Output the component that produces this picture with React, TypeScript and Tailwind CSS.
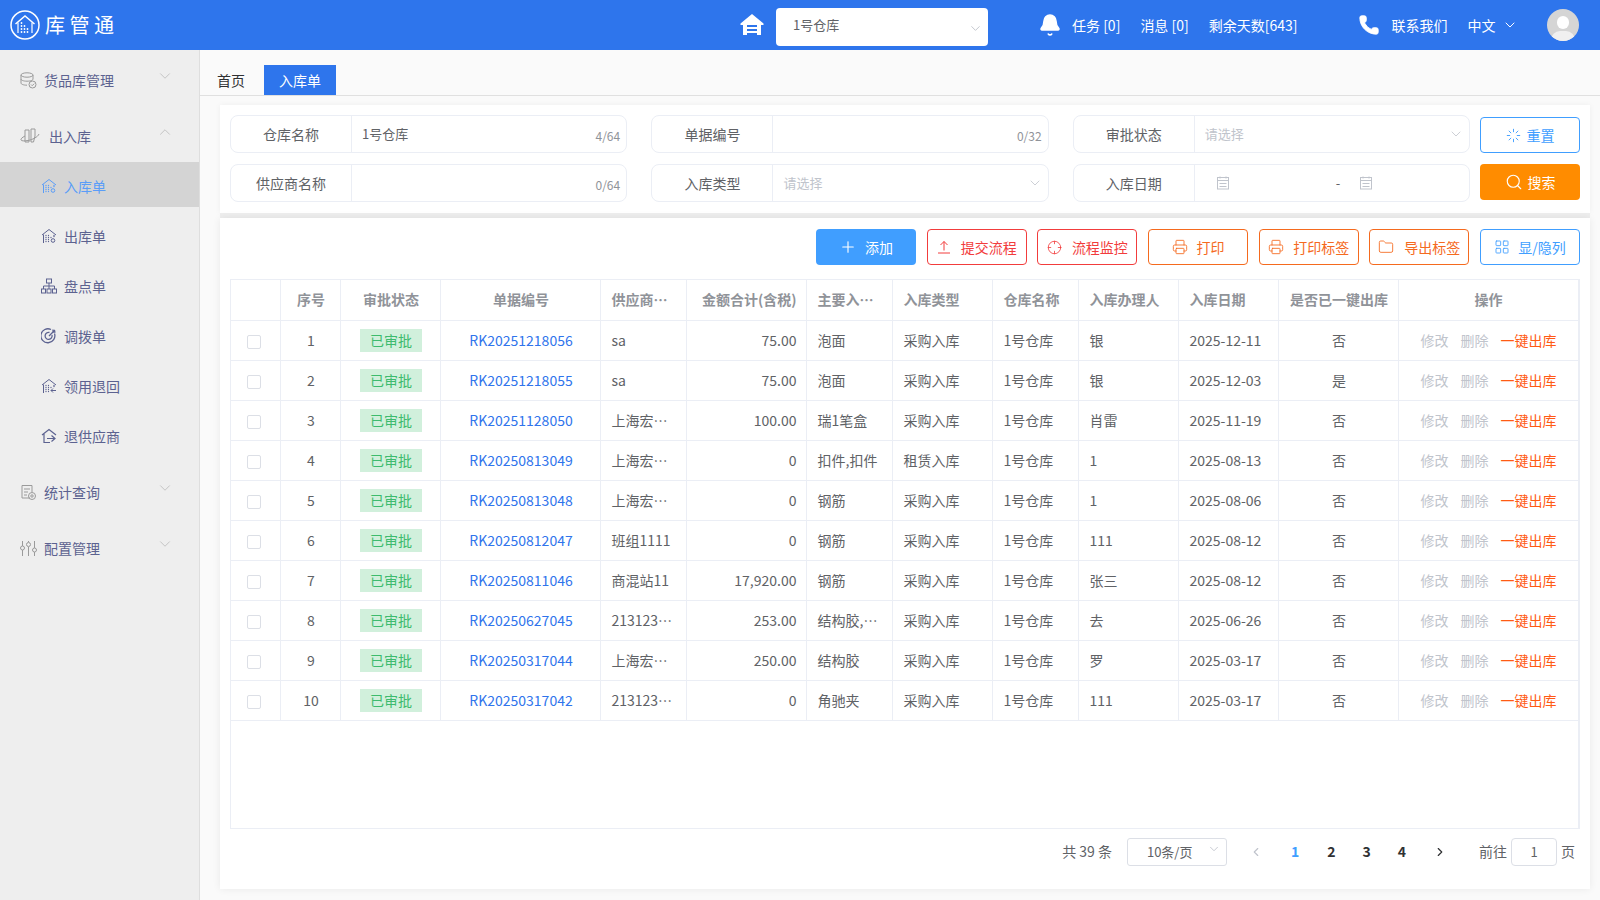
import React from "react";
import { Bell, ChevronDown, ChevronLeft, ChevronRight, ChevronUp, Phone, Plus, Search, Printer, Folder, LayoutGrid, Crosshair, Loader } from "lucide-react";

const rows = [
	{ no: 1, code: "RK20251218056", supplier: "sa", amount: "75.00", main: "泡面", type: "采购入库", person: "银", date: "2025-12-11", out: "否" },
	{ no: 2, code: "RK20251218055", supplier: "sa", amount: "75.00", main: "泡面", type: "采购入库", person: "银", date: "2025-12-03", out: "是" },
	{ no: 3, code: "RK20251128050", supplier: "上海宏…", amount: "100.00", main: "瑞1笔盒", type: "采购入库", person: "肖雷", date: "2025-11-19", out: "否" },
	{ no: 4, code: "RK20250813049", supplier: "上海宏…", amount: "0", main: "扣件,扣件", type: "租赁入库", person: "1", date: "2025-08-13", out: "否" },
	{ no: 5, code: "RK20250813048", supplier: "上海宏…", amount: "0", main: "钢筋", type: "采购入库", person: "1", date: "2025-08-06", out: "否" },
	{ no: 6, code: "RK20250812047", supplier: "班组1111", amount: "0", main: "钢筋", type: "采购入库", person: "111", date: "2025-08-12", out: "否" },
	{ no: 7, code: "RK20250811046", supplier: "商混站11", amount: "17,920.00", main: "钢筋", type: "采购入库", person: "张三", date: "2025-08-12", out: "否" },
	{ no: 8, code: "RK20250627045", supplier: "213123…", amount: "253.00", main: "结构胶,…", type: "采购入库", person: "去", date: "2025-06-26", out: "否" },
	{ no: 9, code: "RK20250317044", supplier: "上海宏…", amount: "250.00", main: "结构胶", type: "采购入库", person: "罗", date: "2025-03-17", out: "否" },
	{ no: 10, code: "RK20250317042", supplier: "213123…", amount: "0", main: "角驰夹", type: "采购入库", person: "111", date: "2025-03-17", out: "否" },
];

const colWidths = [49, 60, 100, 160, 86, 120, 86, 100, 86, 100, 100, 120, 181];

const HouseIcon = ({ className, mark }: { className?: string; mark?: React.ReactNode }) => (
	<svg viewBox="0 0 16 16" fill="none" stroke="currentColor" strokeWidth="1" className={className}>
		<path d="M1 7 8 1.5 15 7" />
		<path d="M2.5 6.500V15" />
		<path d="M5 7.500v.01M5 9.500v.01M5 11.500v.01M5 13.500v.01M7.500 7.500v.01M7.500 9.500v.01M7.500 11.500v.01M7.500 13.500v.01M10 9.500v.01M13 7.500v1" strokeWidth="1.300" strokeLinecap="round" />
		{mark}
	</svg>
);

const CalendarIcon = () => (
	<svg viewBox="0 0 14 14" fill="none" stroke="currentColor" className="h-[14px] w-[14px] shrink-0">
		<path d="M4 .5v2M10 .5v2" />
		<rect x="1.500" y="1.500" width="11" height="11.500" />
		<path d="M1.500 4.500h11M3.500 7.500h7M3.500 10.500h7" />
	</svg>
);

const SubItem = ({ label, icon, active }: { label: string; icon: React.ReactNode; active?: boolean }) => (
	<div className={`flex h-[45px] items-center pl-[41px] pt-[3px] ${active ? "bg-[#d4d4d4] text-[#5a9df8]" : "text-[#5c6290]"}`}>
		<span className="flex h-4 w-4 items-center justify-center">{icon}</span>
		<span className="ml-[7px] text-[14px]">{label}</span>
	</div>
);

const MenuGroup = ({ label, icon, open, wide }: { label: string; icon: React.ReactNode; open?: boolean; wide?: boolean }) => (
	<div className="flex h-[45px] items-center pl-[20px] pr-[25px] text-[#5c6290]">
		<span className="flex h-[18px] items-center justify-center text-[#9a9a9a]">{icon}</span>
		<span className={`text-[14px] ${wide ? "ml-[9px]" : "ml-[7px]"}`}>{label}</span>
		<span className="flex-1" />
		{open ? <ChevronUp className="mb-[10px] h-[18px] w-[18px] text-[#b5b5b5]" strokeWidth={1} /> : <ChevronDown className="mb-[10px] h-[18px] w-[18px] text-[#b5b5b5]" strokeWidth={1} />}
	</div>
);

const Field = ({ label, children }: { label: string; children: React.ReactNode }) => (
	<div className="flex h-[38px] items-stretch rounded-[8px] border border-[#ebeef5] bg-white">
		<div className="flex w-[121px] shrink-0 items-center justify-center border-r border-[#ebeef5] text-[14px] text-[#606266]">{label}</div>
		<div className="relative flex min-w-0 flex-1 items-center px-[10px] text-[13px] text-[#606266]">{children}</div>
	</div>
);

const Counter = ({ text }: { text: string }) => (
	<span className="absolute bottom-[9px] right-[6px] text-[12px] leading-[14px] text-[#909399]">{text}</span>
);

const SelectHint = () => (
	<>
		<span className="text-[#c0c4cc]">请选择</span>
		<ChevronDown className="absolute right-[5px] top-[10px] h-[16px] w-[16px] text-[#c0c4cc]" strokeWidth={1.2} />
	</>
);

const ToolButton = ({ icon, label, className }: { icon: React.ReactNode; label: string; className: string }) => (
	<button className={`flex h-[36px] w-[100px] items-center justify-center rounded-[4px] border text-[14px] ${className}`}>
		{icon}
		{label}
	</button>
);

export default function App() {
	return (
		<div className="flex h-[900px] w-[1600px] flex-col overflow-hidden bg-[#fafafa] font-['Noto_Sans_CJK_SC','Noto_Sans',sans-serif]">
			<header className="flex h-[50px] shrink-0 items-center bg-[#2e75ec] text-white">
				<svg viewBox="0 0 30 30" fill="none" stroke="white" className="ml-[10px] h-[30px] w-[30px] shrink-0">
					<circle cx="15" cy="15" r="14" strokeWidth="1.500" />
					<path d="M5.500 14 15 6l9.500 8" strokeWidth="1.500" />
					<path d="M8 12.500V23M22 12.500V23" strokeWidth="1.200" />
					<path d="M11.500 13v.01M11.500 16v.01M11.500 19v.01M11.500 22v.01M14.500 16v.01M14.500 19v.01M14.500 22v.01M17.500 19v.01M17.500 22v.01" strokeWidth="1.800" strokeLinecap="round" />
				</svg>
				<span className="ml-[5px] w-[76px] shrink-0 text-[20px] leading-none tracking-[4.500px]">库管通</span>

				<svg viewBox="0 0 24 24" fill="white" className="ml-[619px] h-[24px] w-[24px] shrink-0">
					<path d="M12 1 0.5 10.500V12H3v10h18V12h2.500v-1.500z" />
					<path d="M7 12h10v2H7zM7 16h10v2H7zM7 20h10v2H7z" fill="#2e75ec" />
				</svg>
				<div className="relative ml-[12px] mt-[4px] flex h-[38px] w-[212px] items-center rounded-[4px] bg-white pb-[4px] pl-[17px] text-[13px] text-[#606266]">
					1号仓库
					<ChevronDown className="absolute right-[5px] top-[13px] h-[15px] w-[15px] text-[#c0c4cc]" strokeWidth={1.5} />
				</div>
				<Bell className="ml-[50px] h-[24px] w-[24px]" fill="white" strokeWidth={1.5} />
				<span className="ml-[10px] text-[14px]">任务 [0]</span>
				<span className="ml-[20px] text-[14px]">消息 [0]</span>
				<span className="ml-[20px] text-[14px]">剩余天数[643]</span>
				<Phone className="ml-[60px] h-[22px] w-[22px]" fill="white" strokeWidth={1} />
				<span className="ml-[12px] text-[14px]">联系我们</span>
				<span className="ml-[20px] text-[14px]">中文</span>
				<ChevronDown className="ml-[6px] h-[16px] w-[16px]" strokeWidth={1.5} />
				<div className="relative ml-[29px] h-[32px] w-[32px] overflow-hidden rounded-full bg-[#d5d5d5]">
					<div className="absolute left-[10px] top-[7px] h-[13px] w-[12px] rounded-full bg-white" />
					<div className="absolute left-[4px] top-[22px] h-[18px] w-[24px] rounded-full bg-[#f0f0f0]" />
				</div>
			</header>

			<div className="flex min-h-0 flex-1">
				<aside className="w-[200px] shrink-0 border-r border-[#dedede] bg-[#eeeeee] pt-[8px]">
					<MenuGroup label="货品库管理" icon={
						<svg viewBox="0 0 17 17" fill="none" stroke="currentColor" className="h-[17px] w-[17px]">
							<ellipse cx="7" cy="3" rx="6" ry="2.200" />
							<path d="M1 3v8c0 1.200 2.500 2.200 6 2.200M1 7c0 1.200 2.500 2.200 6 2.200S13 8.200 13 7V3" />
							<circle cx="12.500" cy="12.500" r="3.500" />
							<path d="m11 12.500 1.200 1.200 2-2" />
						</svg>
					} />
					<div className="h-[11px]" />
					<MenuGroup label="出入库" open wide icon={
						<svg viewBox="0 0 20 17" fill="none" stroke="currentColor" className="h-[17px] w-[20px] shrink-0">
							<path d="M5 2h4v12H5zM11 1h4v7l-1.500 6H11z" />
							<path d="M5 8C2 9.500.5 11 1 12s3 1.200 7 .5 10-3.500 11-6.500" />
						</svg>
					} />
					<div className="h-[3px]" />
					<SubItem active label="入库单" icon={<HouseIcon className="h-4 w-4" mark={<circle cx="12" cy="12.500" r="1.800" />} />} />
					<div className="h-[5px]" />
					<SubItem label="出库单" icon={<HouseIcon className="h-4 w-4" mark={<circle cx="12" cy="12.500" r="1.800" />} />} />
					<div className="h-[5px]" />
					<SubItem label="盘点单" icon={
						<svg viewBox="0 0 16 16" fill="none" stroke="currentColor" className="h-4 w-4">
							<rect x="5.500" y="1" width="5" height="4" />
							<rect x="0.500" y="11" width="4" height="4" />
							<rect x="6" y="11" width="4" height="4" />
							<rect x="11.500" y="11" width="4" height="4" />
							<path d="M8 5v6M2.500 11V8h11v3" />
						</svg>
					} />
					<div className="h-[5px]" />
					<SubItem label="调拨单" icon={
						<svg viewBox="0 0 16 16" fill="none" stroke="currentColor" strokeWidth="1.300" className="h-4 w-4">
							<path d="M13.500 5.500A7 7 0 1 1 10 1.500" />
							<path d="M11 7a3.500 3.500 0 1 1-2.500-2.500" />
							<path d="M8 8l6-6M12 1.500V4h2.500" />
						</svg>
					} />
					<div className="h-[5px]" />
					<SubItem label="领用退回" icon={<HouseIcon className="h-4 w-4" mark={<path d="M10 12.500h5M12 10.500l-2 2 2 2" />} />} />
					<div className="h-[5px]" />
					<SubItem label="退供应商" icon={
						<svg viewBox="0 0 16 16" fill="none" stroke="currentColor" strokeWidth="1.200" className="h-4 w-4">
							<path d="M1 7 8 1.500 15 7M3 6v8.500h6" />
							<path d="M6 10.500h8M10.500 7.500 14 10.500 10.500 13.500" />
						</svg>
					} />
					<div className="h-[13px]" />
					<MenuGroup label="统计查询" icon={
						<svg viewBox="0 0 17 17" fill="none" stroke="currentColor" className="h-[17px] w-[17px]">
							<path d="M10 14H2V1.500h10V8" />
							<path d="M4 5h6M4 8h4M4 11h3" />
							<circle cx="12" cy="12" r="3.500" />
							<circle cx="12" cy="12" r="1.200" />
						</svg>
					} />
					<div className="h-[11px]" />
					<MenuGroup label="配置管理" icon={
						<svg viewBox="0 0 17 17" fill="none" stroke="currentColor" className="h-[17px] w-[17px]">
							<path d="M2.500 1v5M2.500 10v6M8.500 1v1M8.500 7v9M14.500 1v7M14.500 12v4" />
							<circle cx="2.500" cy="8" r="2" />
							<circle cx="8.500" cy="4.500" r="2" />
							<circle cx="14.500" cy="10" r="2" />
						</svg>
					} />
				</aside>

				<main className="flex min-w-0 flex-1 flex-col">
					<div className="flex h-[46px] shrink-0 items-end border-b border-[#e0e0e0] pl-[17px]">
						<div className="flex h-[30px] items-center text-[14px] text-[#303133]">首页</div>
						<div className="ml-[19px] flex h-[30px] w-[72px] items-center justify-center bg-[#2e75ec] text-[14px] text-white">入库单</div>
					</div>

					<div className="flex min-h-0 flex-1 flex-col pb-[11px] pl-[20px] pr-[10px] pt-[9px]">
						<section className="h-[108px] shrink-0 bg-white px-[10px] pt-[10px] shadow-[0_0_6px_rgba(0,0,0,0.05)]">
							<div className="flex gap-[10px]">
								<div className="grid flex-1 grid-cols-3 gap-x-[24.250px] gap-y-[11px]">
									<Field label="仓库名称">
										1号仓库
										<Counter text="4/64" />
									</Field>
									<Field label="单据编号">
										<Counter text="0/32" />
									</Field>
									<Field label="审批状态">
										<SelectHint />
									</Field>
									<Field label="供应商名称">
										<Counter text="0/64" />
									</Field>
									<Field label="入库类型">
										<SelectHint />
									</Field>
									<Field label="入库日期">
										<div className="flex w-full items-center text-[#c0c4cc]">
											<span className="ml-[11px]"><CalendarIcon /></span>
											<span className="ml-[106px] w-[8px] text-[#606266]">-</span>
											<span className="ml-[15px]"><CalendarIcon /></span>
										</div>
									</Field>
								</div>
								<div className="flex w-[100px] shrink-0 flex-col gap-[11px] pt-[2px]">
									<button className="flex h-[36px] items-center justify-center gap-[6px] rounded-[4px] border border-[#409eff] bg-white text-[14px] text-[#409eff]">
										<Loader className="h-[15px] w-[15px]" strokeWidth={1.5} />
										重置
									</button>
									<button className="flex h-[36px] items-center justify-center gap-[5px] rounded-[4px] bg-[#ff8c00] text-[14px] text-white">
										<Search className="h-[18px] w-[18px]" strokeWidth={1.5} />
										搜索
									</button>
								</div>
							</div>
						</section>

						<div className="h-[5px] shrink-0 bg-[#eeeeee]" />

						<section className="flex min-h-0 flex-1 flex-col bg-white px-[10px] shadow-[0_0_8px_rgba(0,0,0,0.07)]">
							<div className="flex h-[61px] shrink-0 items-center justify-end gap-[10.670px] pb-[3px]">
								<button className="flex h-[36px] w-[100px] items-center justify-center gap-[8px] rounded-[4px] bg-[#409eff] text-[14px] text-white">
									<Plus className="h-[18px] w-[18px]" strokeWidth={1.5} />
									添加
								</button>
								<ToolButton label="提交流程" className="gap-[10px] border-[#f23c3c] text-[#f23c3c]" icon={
									<svg viewBox="0 0 14 14" fill="none" stroke="currentColor" className="h-[14px] w-[14px]">
										<path d="M7 10.500V1.500M3.500 5 7 1.500 10.500 5M1 13h12" />
									</svg>
								} />
								<ToolButton label="流程监控" className="gap-[10px] border-[#f23c3c] text-[#f23c3c]" icon={<Crosshair className="h-[15px] w-[15px]" strokeWidth={1.3} />} />
								<ToolButton label="打印" className="gap-[9px] border-[#f56a1e] text-[#f56a1e]" icon={<Printer className="h-[16px] w-[16px]" strokeWidth={1.3} />} />
								<ToolButton label="打印标签" className="gap-[9px] border-[#f56a1e] text-[#f56a1e]" icon={<Printer className="h-[16px] w-[16px]" strokeWidth={1.3} />} />
								<ToolButton label="导出标签" className="gap-[10px] border-[#f56a1e] text-[#f56a1e]" icon={<Folder className="h-[16px] w-[16px]" strokeWidth={1.3} />} />
								<ToolButton label="显/隐列" className="gap-[8px] border-[#409eff] text-[#409eff]" icon={<LayoutGrid className="h-[16px] w-[16px]" strokeWidth={1.3} />} />
							</div>

							<div className="box-border h-[550px] w-[1350px] shrink-0 border border-r-2 border-[#ebeef5]">
								<table className="w-[1348px] table-fixed border-collapse text-[14px] text-[#606266]">
									<colgroup>
										{colWidths.map((w, i) => <col key={i} style={{ width: w }} />)}
									</colgroup>
									<thead>
										<tr className="h-[40px] border-b border-[#ebeef5] font-bold text-[#909399] [&>th]:border-r [&>th]:border-[#ebeef5] [&>th]:pl-[11px] [&>th]:pr-[9px] [&>th]:font-bold [&>th]:whitespace-nowrap">
											<th />
											<th className="text-center">序号</th>
											<th className="text-center">审批状态</th>
											<th className="text-center">单据编号</th>
											<th className="text-left">供应商…</th>
											<th className="text-right">金额合计(含税)</th>
											<th className="text-left">主要入…</th>
											<th className="text-left">入库类型</th>
											<th className="text-left">仓库名称</th>
											<th className="text-left">入库办理人</th>
											<th className="text-left">入库日期</th>
											<th className="text-center">是否已一键出库</th>
											<th className="!px-[10px] text-center">操作</th>
										</tr>
									</thead>
									<tbody>
										{rows.map((row) => (
											<tr key={row.no} className="h-[40px] border-b border-[#ebeef5] [&>td]:border-r [&>td]:border-[#ebeef5] [&>td]:pl-[11px] [&>td]:pr-[9px] [&>td]:whitespace-nowrap">
												<td>
													<div className="ml-[5px] mt-[3px] h-[14px] w-[14px] rounded-[2px] border border-[#dcdfe6] bg-white" />
												</td>
												<td className="text-center">{row.no}</td>
												<td className="text-center">
													<span className="inline-block h-[23px] w-[62px] bg-[#d1f0dc] text-center text-[14px] leading-[23px] text-[#3dbb6e]">已审批</span>
												</td>
												<td className="text-center text-[#2f74ec]">{row.code}</td>
												<td>{row.supplier}</td>
												<td className="text-right">{row.amount}</td>
												<td>{row.main}</td>
												<td>{row.type}</td>
												<td>1号仓库</td>
												<td>{row.person}</td>
												<td>{row.date}</td>
												<td className="text-center">{row.out}</td>
												<td className="!px-[10px]">
													<div className="flex justify-center gap-[12px]">
														<span className="text-[#c0c4cc]">修改</span>
														<span className="text-[#c0c4cc]">删除</span>
														<span className="text-[#ff5a14]">一键出库</span>
													</div>
												</td>
											</tr>
										))}
									</tbody>
								</table>
							</div>

							<div className="flex flex-1 items-center justify-end pb-[15px] pr-[5px] text-[14px] text-[#606266]">
								<span>共 39 条</span>
								<div className="relative ml-[15px] flex h-[28px] w-[100px] items-center rounded-[3px] border border-[#dcdfe6] pl-[19px] text-[13px]">
									10条/页
									<ChevronDown className="absolute right-[5px] top-[3px] h-[14px] w-[14px] text-[#c0c4cc]" strokeWidth={1.5} />
								</div>
								<ChevronLeft className="ml-[22px] h-[14px] w-[14px] text-[#c0c4cc]" strokeWidth={2} />
								<span className="ml-[28px] font-bold text-[#409eff]">1</span>
								<span className="ml-[28px] font-bold text-[#303133]">2</span>
								<span className="ml-[27px] font-bold text-[#303133]">3</span>
								<span className="ml-[27px] font-bold text-[#303133]">4</span>
								<ChevronRight className="ml-[27px] h-[14px] w-[14px] text-[#303133]" strokeWidth={2} />
								<span className="ml-[32px]">前往</span>
								<div className="ml-[4px] flex h-[28px] w-[46px] items-center justify-center rounded-[4px] border border-[#dcdfe6] text-[13px]">1</div>
								<span className="ml-[4px]">页</span>
							</div>
						</section>
					</div>
				</main>
			</div>
		</div>
	);
}
